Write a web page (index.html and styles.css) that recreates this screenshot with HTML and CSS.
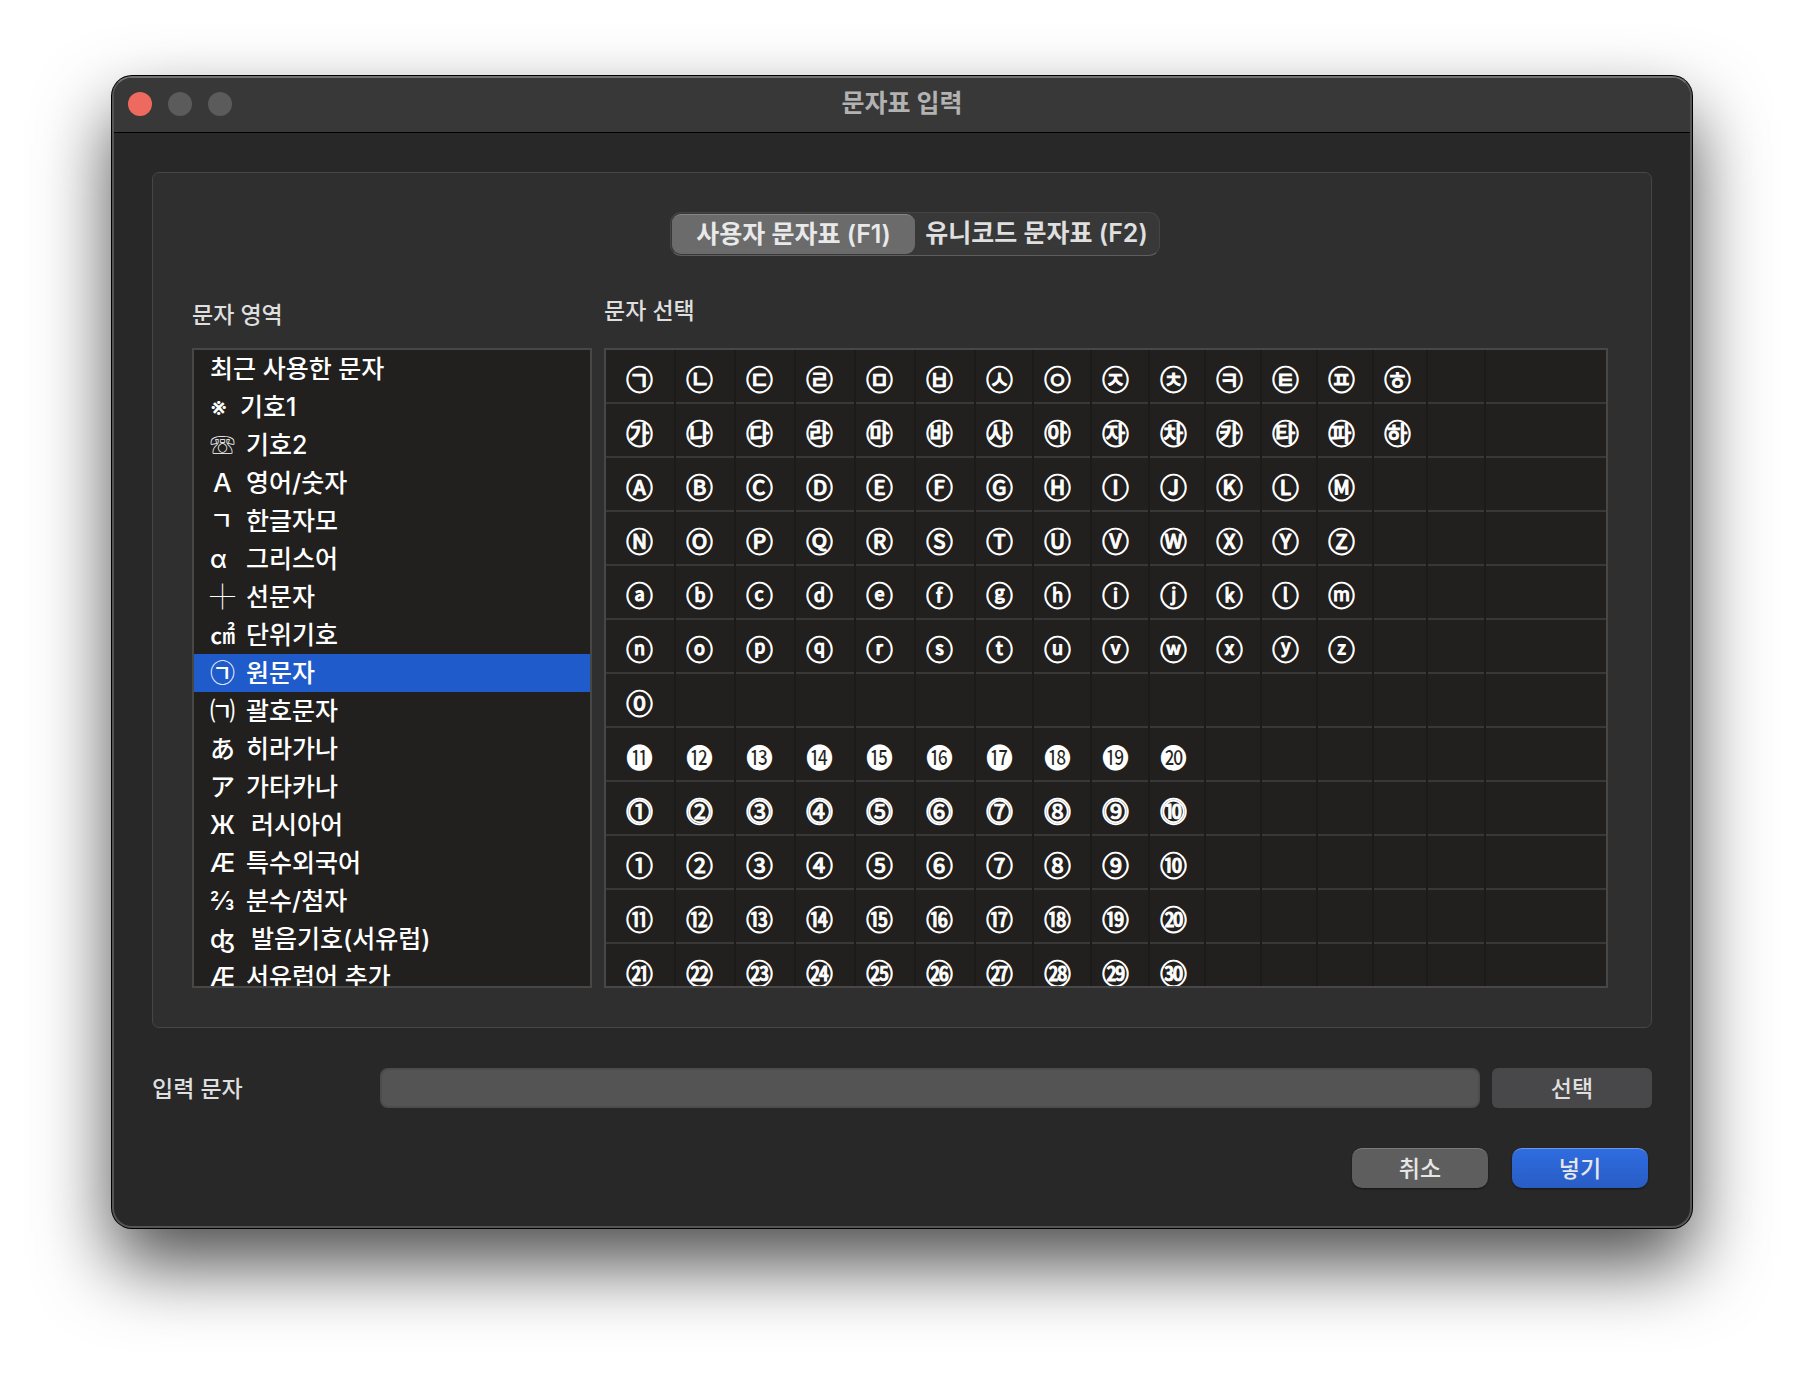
FILE: index.html
```html
<!DOCTYPE html>
<html lang="ko">
<head>
  <meta charset="UTF-8">
  <title>문자표 입력</title>
  <meta name="viewport" content="width=device-width, initial-scale=1.0">
  <link rel="stylesheet" href="styles.css">
</head>
<body>
  <div class="window">
    <header class="titlebar">
      <div class="lights">
        <button class="light close" aria-label="닫기"></button>
        <button class="light" aria-label="최소화" disabled></button>
        <button class="light" aria-label="확대" disabled></button>
      </div>
      <h1>문자표 입력</h1>
    </header>

    <main class="content">
      <section class="panel">
        <div class="tabs">
          <button class="tab active">사용자 문자표 (F1)</button>
          <button class="tab">유니코드 문자표 (F2)</button>
        </div>

        <div class="panes">
          <div class="pane-left">
            <h2 class="area-title">문자 영역</h2>
            <ul class="box area-list">
              <li><button>최근 사용한 문자</button></li>
              <li><button><span class="sym narrow">※</span>기호1</button></li>
              <li><button><span class="sym">☏</span>기호2</button></li>
              <li><button><span class="sym">Ａ</span>영어/숫자</button></li>
              <li><button><span class="sym">ㄱ</span>한글자모</button></li>
              <li><button><span class="sym">α</span>그리스어</button></li>
              <li><button><span class="sym">┼</span>선문자</button></li>
              <li><button><span class="sym">㎠</span>단위기호</button></li>
              <li><button class="selected"><span class="sym">㉠</span>원문자</button></li>
              <li><button><span class="sym">㈀</span>괄호문자</button></li>
              <li><button><span class="sym">あ</span>히라가나</button></li>
              <li><button><span class="sym">ア</span>가타카나</button></li>
              <li><button><span class="sym wide">Ж</span>러시아어</button></li>
              <li><button><span class="sym">Æ</span>특수외국어</button></li>
              <li><button><span class="sym">⅔</span>분수/첨자</button></li>
              <li><button><span class="sym wide">ʤ</span>발음기호(서유럽)</button></li>
              <li><button><span class="sym">Æ</span>서유럽어 추가</button></li>
            </ul>
          </div>

          <div class="pane-right">
            <h2 class="char-title">문자 선택</h2>
            <div class="box char-box">
              <table class="char-table">
                <colgroup>
                  <col class="w70">
                  <col class="w60" span="5">
                  <col class="w58" span="3">
                  <col class="w56" span="4">
                  <col class="w54">
                  <col class="w58">
                  <col>
                </colgroup>
                <tbody id="chars"></tbody>
              </table>
            </div>
          </div>
        </div>
      </section>

      <div class="input-row">
        <label for="text">입력 문자</label>
        <input type="text" id="text">
        <button class="pick">선택</button>
      </div>

      <div class="actions">
        <button class="btn">취소</button>
        <button class="btn primary">넣기</button>
      </div>
    </main>
  </div>
  <script src="script.js"></script>
</body>
</html>
```

FILE: styles.css
```css
body {
  margin: 0;
  padding: 76px 112px 148px;
  background-color: #fff;
  font-family: Inter, "Noto Sans CJK KR", sans-serif;
  font-size: 23px;
  font-weight: 500;
  color: #dfdfdf;
}

h1, h2, ul {
  margin: 0;
  padding: 0;
}

button, input {
  font: inherit;
  color: inherit;
  border: none;
  padding: 0;
  box-sizing: border-box;
}

.window {
  background-color: #282828;
  border: 2px solid #555;
  border-top-color: #70736e;
  border-radius: 20px;
  box-shadow: 0 0 0 1px #000, 0 36px 74px rgba(0, 0, 0, 0.7);
}

/* Title bar */
.titlebar {
  display: grid;
  grid-template-columns: 1fr auto 1fr;
  align-items: center;
  height: 52px;
  padding: 0 14px 2px;
  background-color: #383838;
  border-bottom: 1px solid #000;
  border-radius: 18px 18px 0 0;
}

.titlebar h1 {
  font-size: 25px;
  line-height: 30px;
  font-weight: bold;
  color: #b2b2b2;
  padding-bottom: 2px;
}

.lights {
  display: flex;
  gap: 16px;
}

.light {
  width: 24px;
  height: 24px;
  border-radius: 50%;
  background-color: #5b5b5b;
}

.light.close {
  background-color: #ee6a5e;
}

.content {
  padding: 39px 38px 38px;
}

.panel {
  padding: 39px 43px 39px 39px;
  background-color: #2f2f2f;
  border: 1px solid #464646;
  border-radius: 7px;
}

/* Tabs */
.tabs {
  display: flex;
  width: 490px;
  height: 44px;
  margin-left: calc(50% - 230px);
  padding: 1px;
  box-sizing: border-box;
  background-color: #383838;
  border: 1px solid #454545;
  border-bottom-color: #5e5e5e;
  border-radius: 11px;
}

.tab {
  flex: 1;
  background: none;
  border-radius: 9px;
  font-size: 25px;
  line-height: 30px;
  font-weight: 600;
  white-space: nowrap;
  padding-bottom: 2px;
}

.tab.active {
  background-color: #6b6b6b;
  border-top: 1px solid #868686;
  color: #e9e9e9;
}

/* Panes */
.panes {
  display: grid;
  grid-template-columns: 400px 1fr;
  gap: 12px;
}

h2 {
  height: 92px;
  box-sizing: border-box;
  font-size: 23px;
  line-height: 32px;
  font-weight: 500;
}

.area-title {
  padding-top: 43px;
}

.char-title {
  padding-top: 39px;
}

.box {
  height: 640px;
  box-sizing: border-box;
  border: 2px solid #474747;
  background-color: #21201e;
  color: #fff;
  overflow: auto;
  scrollbar-width: none;
}

.area-list {
  list-style: none;
}

.area-list button {
  display: block;
  width: 100%;
  height: 38px;
  padding: 0 16px;
  background: none;
  font-size: 25px;
  line-height: 38px;
  text-align: left;
  white-space: nowrap;
}

.area-list .selected {
  background-color: #1f5bcb;
}

.sym {
  display: inline-block;
  min-width: 25px;
  margin-right: 11px;
}

.sym.narrow {
  margin-right: 5px;
}

.sym.wide {
  min-width: 30px;
}

/* Character table */
.char-table {
  width: 100%;
  table-layout: fixed;
  border-collapse: separate;
  border-spacing: 0;
}

.char-table td {
  height: 54px;
  padding: 0;
  border-right: 2px solid #1b1b1a;
  background: linear-gradient(#383838, #383838) left bottom / 100% 2px no-repeat;
}

.char-table td:last-child {
  border-right: none;
}

.char-table button {
  display: block;
  width: 100%;
  height: 54px;
  padding: 4px 0 0 10px;
  background: none;
  font-family: "Noto Sans CJK KR", sans-serif;
  font-size: 27px;
  font-weight: 400;
  line-height: 50px;
  text-align: left;
  -webkit-text-stroke: 1px #fff;
}

.char-table td:first-child button {
  padding-left: 20px;
}

/* filled circles would lose their digits under a stroke */
.char-table .filled button {
  -webkit-text-stroke: 0;
}

.w70 { width: 70px; }
.w60 { width: 60px; }
.w58 { width: 58px; }
.w56 { width: 56px; }
.w54 { width: 54px; }

/* Input row */
.input-row {
  display: grid;
  grid-template-columns: 216px 1fr 160px;
  column-gap: 12px;
  align-items: center;
  margin-top: 40px;
}

.input-row label {
  padding-bottom: 2px;
}

.input-row input {
  width: 100%;
  height: 40px;
  padding: 0 8px;
  background-color: #545454;
  border: 2px solid #4c4c4c;
  border-radius: 8px;
}

.pick {
  height: 40px;
  padding-bottom: 2px;
  background-color: #48484a;
  border-radius: 6px;
}

.actions {
  display: flex;
  justify-content: flex-end;
  gap: 24px;
  margin-top: 40px;
  padding-right: 4px;
}

.btn {
  width: 136px;
  height: 40px;
  padding-bottom: 4px;
  background-color: #5e5e5e;
  border-top: 1px solid #7c7c7c;
  border-radius: 10px;
  box-shadow: 0 1px 2px rgba(0, 0, 0, 0.5);
  color: #e6e6e6;
}

.primary {
  background: linear-gradient(#2f6ce0, #285dc4);
  border-top-color: #6c98ec;
}
```

FILE: script.js
```js
var COLS = 16;

var rows = [
  "㉠㉡㉢㉣㉤㉥㉦㉧㉨㉩㉪㉫㉬㉭",
  "㉮㉯㉰㉱㉲㉳㉴㉵㉶㉷㉸㉹㉺㉻",
  "ⒶⒷⒸⒹⒺⒻⒼⒽⒾⒿⓀⓁⓂ",
  "ⓃⓄⓅⓆⓇⓈⓉⓊⓋⓌⓍⓎⓏ",
  "ⓐⓑⓒⓓⓔⓕⓖⓗⓘⓙⓚⓛⓜ",
  "ⓝⓞⓟⓠⓡⓢⓣⓤⓥⓦⓧⓨⓩ",
  "⓪",
  "⓫⓬⓭⓮⓯⓰⓱⓲⓳⓴",
  "⓵⓶⓷⓸⓹⓺⓻⓼⓽⓾",
  "①②③④⑤⑥⑦⑧⑨⑩",
  "⑪⑫⑬⑭⑮⑯⑰⑱⑲⑳",
  "㉑㉒㉓㉔㉕㉖㉗㉘㉙㉚"
];

var tbody = document.getElementById("chars");
var text = document.getElementById("text");

rows.forEach(function(row) {
  var tr = document.createElement("tr");
  if (row[0] === "⓫") {
    tr.className = "filled";
  }
  for (var i = 0; i < COLS; i++) {
    var td = document.createElement("td");
    if (row[i]) {
      var button = document.createElement("button");
      button.textContent = row[i];
      button.addEventListener("click", function() {
        text.value += this.textContent;
      });
      td.appendChild(button);
    }
    tr.appendChild(td);
  }
  tbody.appendChild(tr);
});
```
